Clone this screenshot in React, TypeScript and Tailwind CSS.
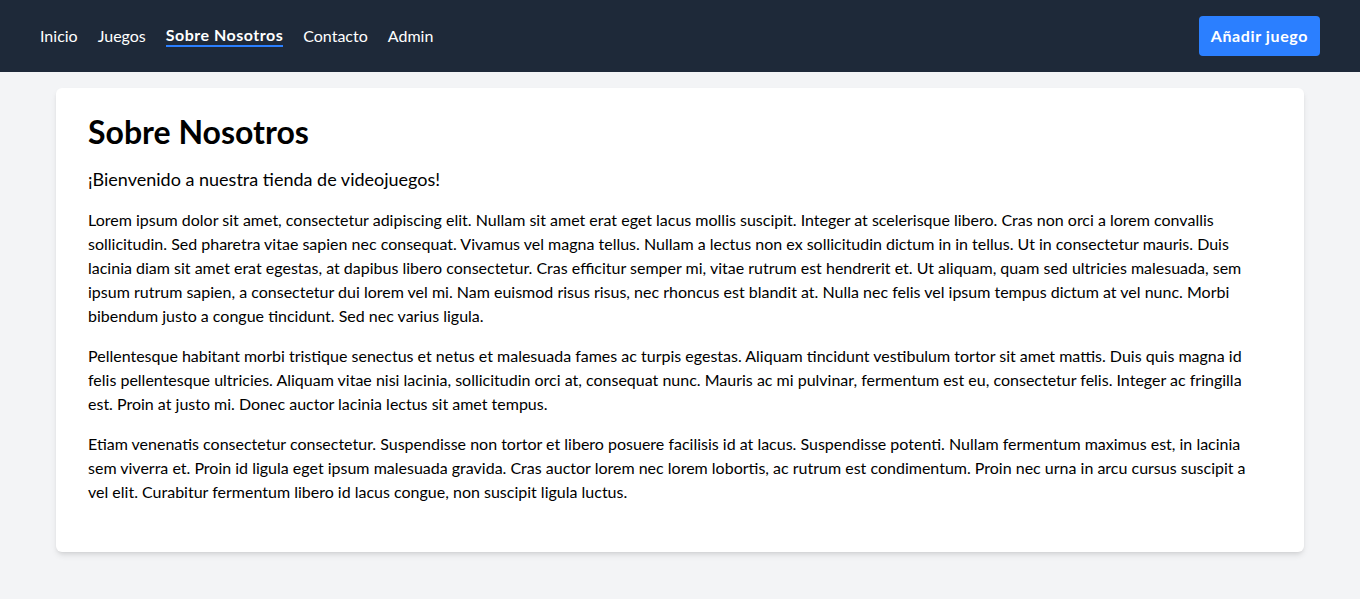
import React from "react";

// lines kept as in the reference so the wrap points match
const paragraphs = [
  [
    "Lorem ipsum dolor sit amet, consectetur adipiscing elit. Nullam sit amet erat eget lacus mollis suscipit. Integer at scelerisque libero. Cras non orci a lorem convallis",
    "sollicitudin. Sed pharetra vitae sapien nec consequat. Vivamus vel magna tellus. Nullam a lectus non ex sollicitudin dictum in in tellus. Ut in consectetur mauris. Duis",
    "lacinia diam sit amet erat egestas, at dapibus libero consectetur. Cras efficitur semper mi, vitae rutrum est hendrerit et. Ut aliquam, quam sed ultricies malesuada, sem",
    "ipsum rutrum sapien, a consectetur dui lorem vel mi. Nam euismod risus risus, nec rhoncus est blandit at. Nulla nec felis vel ipsum tempus dictum at vel nunc. Morbi",
    "bibendum justo a congue tincidunt. Sed nec varius ligula.",
  ],
  [
    "Pellentesque habitant morbi tristique senectus et netus et malesuada fames ac turpis egestas. Aliquam tincidunt vestibulum tortor sit amet mattis. Duis quis magna id",
    "felis pellentesque ultricies. Aliquam vitae nisi lacinia, sollicitudin orci at, consequat nunc. Mauris ac mi pulvinar, fermentum est eu, consectetur felis. Integer ac fringilla",
    "est. Proin at justo mi. Donec auctor lacinia lectus sit amet tempus.",
  ],
  [
    "Etiam venenatis consectetur consectetur. Suspendisse non tortor et libero posuere facilisis id at lacus. Suspendisse potenti. Nullam fermentum maximus est, in lacinia",
    "sem viverra et. Proin id ligula eget ipsum malesuada gravida. Cras auctor lorem nec lorem lobortis, ac rutrum est condimentum. Proin nec urna in arcu cursus suscipit a",
    "vel elit. Curabitur fermentum libero id lacus congue, non suscipit ligula luctus.",
  ],
];

const links = ["Inicio", "Juegos", "Sobre Nosotros", "Contacto", "Admin"];

export default function App() {
  return (
    <div className="min-h-screen bg-gray-100 font-['Lato',sans-serif] text-black">
      <header className="bg-gray-800 h-[72px] px-10 flex items-center justify-between">
        <nav className="flex items-center gap-5">
          {links.map((l) => (
            <a
              key={l}
              href="#"
              className={
                l === "Sobre Nosotros"
                  ? "text-white font-bold tracking-[0.5px] border-b-2 border-blue-500 leading-5"
                  : "text-white leading-5"
              }
            >
              {l}
            </a>
          ))}
        </nav>
        <button className="bg-blue-500 text-white font-bold tracking-[0.6px] h-10 px-3 rounded">Añadir juego</button>
      </header>

      <main className="max-w-[1280px] mx-auto px-4 mt-4">
        <div className="bg-white rounded-md shadow-md px-8 pt-6 pb-8">
          <h1 className="text-[32px] font-bold leading-tight mb-[13px]">Sobre Nosotros</h1>
          <p className="text-lg mb-[15px]">¡Bienvenido a nuestra tienda de videojuegos!</p>
          {paragraphs.map((lines, i) => (
            <p key={i} className="leading-6 mb-4">
              {lines.map((line, j) => (
                <React.Fragment key={j}>
                  {line}
                  {j < lines.length - 1 && <br />}
                </React.Fragment>
              ))}
            </p>
          ))}
        </div>
      </main>
    </div>
  );
}
